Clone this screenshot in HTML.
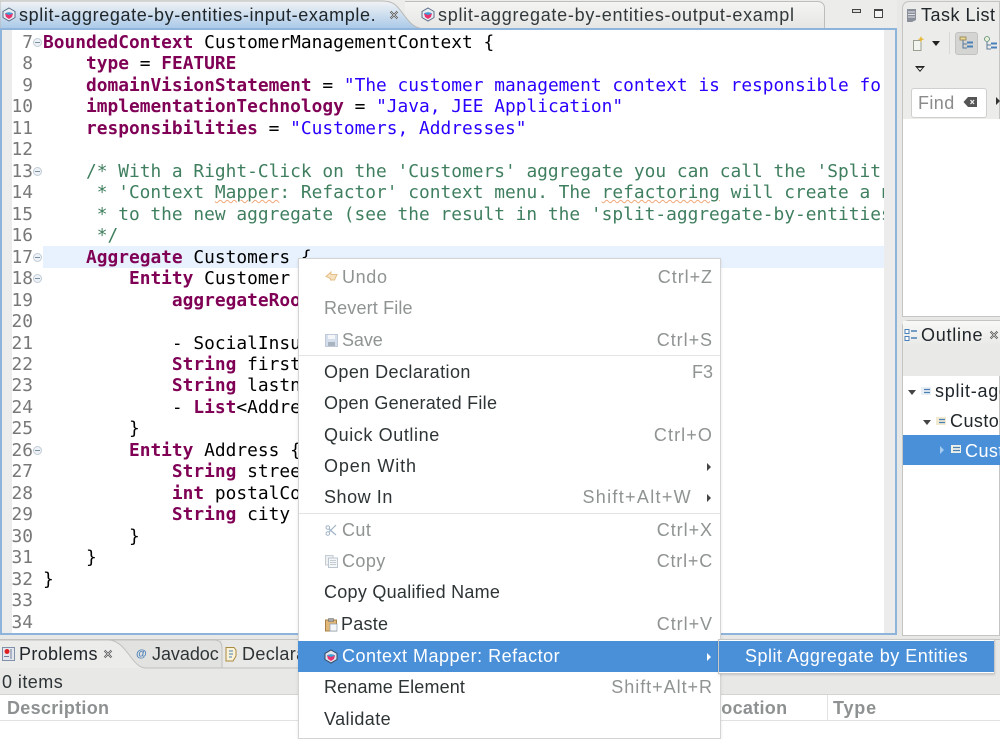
<!DOCTYPE html>
<html><head><meta charset="utf-8">
<style>
html,body{margin:0;padding:0;width:1000px;height:739px;overflow:hidden;background:#e8e8e7}
body{position:relative;font-family:"Liberation Sans",sans-serif;font-size:18px;color:#2e3436}
.a{position:absolute}
.t{position:absolute;white-space:pre;line-height:22px;letter-spacing:.45px}
#code{position:absolute;left:43px;top:31.95px;width:841px;height:601px;overflow:hidden;font-family:"DejaVu Sans Mono",monospace;font-size:17.85px;line-height:21.47px;color:#000;white-space:pre}
#nums{position:absolute;left:2px;top:31.95px;width:31px;text-align:right;font-family:"DejaVu Sans Mono",monospace;font-size:17.85px;line-height:21.47px;color:#787878;white-space:pre}
b{color:#7f0055;font-weight:bold}
.s{color:#2a00ff}.c{color:#3f7f5f}
.u{text-decoration:underline wavy #f0a878 1px}
.f{position:absolute;left:33px;width:7px;height:7px;border:1px solid #c0ccd6;border-radius:50%;background:#eef2f6}
.f:after{content:"";position:absolute;left:1px;top:3px;width:5px;height:1px;background:#7890a0}
.m{position:absolute;left:324px;white-space:pre;line-height:22px;letter-spacing:.42px;color:#2e3436}
.m.d{color:#8f9393}
.k{position:absolute;right:287px;white-space:pre;line-height:22px;letter-spacing:1px;color:#8f9393}
.sep{position:absolute;left:299px;width:421px;height:1px;background:#e4e4e4}
</style></head><body>

<!-- editor tab bar -->
<div class="a" style="left:0;top:0;width:897px;height:29px;background:#ececeb"></div>
<div class="a" style="left:405px;top:1px;width:420px;height:27px;background:linear-gradient(#f4f4f3,#e6e6e5);border-top:1px solid #bdbdbb;border-right:1px solid #bdbdbb;border-radius:0 7px 0 0;box-sizing:border-box"></div>
<svg class="a" style="left:0;top:0" width="430" height="30"><defs><linearGradient id="g" x1="0" y1="0" x2="0" y2="1"><stop offset="0" stop-color="#f1f3f5"/><stop offset="1" stop-color="#a9c9e8"/></linearGradient></defs><path d="M0 29V1H382C396 1 398 8 404 15C410 23 414 28 424 29Z" fill="url(#g)" stroke="#b8b8b6"/></svg>
<svg class="a" style="left:2px;top:7px" width="14" height="15" viewBox="0 0 14 15"><path d="M7 1L13 4.500V10.500L7 14L1 10.500V4.500Z" fill="#e9eef3" stroke="#5a6c85"/><path d="M3 6.500C5 5 9 5 11 6.500L10 10L7 12L4 10Z" fill="#e8336f"/><path d="M3 6.500C5 4.800 9 4.800 11 6.500L7 8Z" fill="#3aa0d8"/></svg>
<div class="t" style="left:19px;top:4px;color:#20262a;letter-spacing:.62px">split-aggregate-by-entities-input-example.</div>
<svg class="a" style="left:389px;top:10px" width="10" height="10" viewBox="0 0 10 10"><path d="M1.500 1.500L8.500 8.500M8.500 1.500L1.500 8.500" stroke="#444" stroke-width="2"/><path d="M1.500 1.500L8.500 8.500M8.500 1.500L1.500 8.500" stroke="#ddd" stroke-width=".8"/></svg>
<svg class="a" style="left:421px;top:7px" width="14" height="15" viewBox="0 0 14 15"><path d="M7 1L13 4.500V10.500L7 14L1 10.500V4.500Z" fill="#e9eef3" stroke="#5a6c85"/><path d="M3 6.500C5 5 9 5 11 6.500L10 10L7 12L4 10Z" fill="#e8336f"/><path d="M3 6.500C5 4.800 9 4.800 11 6.500L7 8Z" fill="#3aa0d8"/></svg>
<div class="t" style="left:438px;top:4px;letter-spacing:.72px;color:#33393b">split-aggregate-by-entities-output-exampl</div>
<div class="a" style="left:852px;top:9px;width:7px;height:2px;border:1px solid #444;background:#ddd;box-sizing:content-box"></div>
<div class="a" style="left:874px;top:9px;width:7px;height:6px;border:1px solid #444;border-top-width:2px;background:#f4f4f4"></div>
<div class="a" style="left:897px;top:0;width:5px;height:739px;background:#e8e8e7"></div>

<!-- editor -->
<div class="a" style="left:0;top:28px;width:897px;height:607px;background:#fff;border:2px solid #8fb4dc;box-sizing:border-box"></div>
<div class="a" style="left:2px;top:30px;width:10px;height:603px;background:#ececec"></div>
<div class="a" style="left:884px;top:30px;width:11px;height:603px;background:#ececec"></div>
<div class="a" style="left:43px;top:246px;width:841px;height:22px;background:#e8f2fe"></div>
<div id="nums">7
8
9
10
11
12
13
14
15
16
17
18
19
20
21
22
23
24
25
26
27
28
29
30
31
32
33
34</div>
<div class="f" style="top:38px"></div>
<div class="f" style="top:167px"></div>
<div class="f" style="top:253px"></div>
<div class="f" style="top:274px"></div>
<div class="f" style="top:446px"></div>
<div id="code"><b>BoundedContext</b> CustomerManagementContext {
    <b>type</b> = <b>FEATURE</b>
    <b>domainVisionStatement</b> = <span class="s">"The customer management context is responsible for managing</span>
    <b>implementationTechnology</b> = <span class="s">"Java, JEE Application"</span>
    <b>responsibilities</b> = <span class="s">"Customers, Addresses"</span>

    <span class="c">/* With a Right-Click on the 'Customers' aggregate you can call the 'Split Aggregate</span>
<span class="c">     * 'Context <span class="u">Mapper</span>: Refactor' context menu. The <span class="u">refactoring</span> will create a new aggregate</span>
<span class="c">     * to the new aggregate (see the result in the 'split-aggregate-by-entities-output</span>
<span class="c">     */</span>
    <b>Aggregate</b> Customers {
        <b>Entity</b> Customer {
            <b>aggregateRoot</b>

            - SocialInsuranceNumber
            <b>String</b> firstname
            <b>String</b> lastname
            - <b>List</b>&lt;Address&gt;
        }
        <b>Entity</b> Address {
            <b>String</b> street
            <b>int</b> postalCode
            <b>String</b> city
        }
    }
}</div>

<!-- task list panel -->
<div class="a" style="left:902px;top:1px;width:98px;height:316px;background:#ececeb;border:1px solid #c4c4c2;border-radius:7px 0 0 0;box-sizing:border-box"></div>
<div class="a" style="left:903px;top:119px;width:97px;height:197px;background:#fff"></div>
<svg class="a" style="left:906px;top:8px" width="12" height="15" viewBox="0 0 12 15"><path d="M1 1H10V12L6 14H1Z" fill="#8a8f9a"/><path d="M2 4H9M2 6.500H9M2 9H9" stroke="#e0e2e6"/></svg>
<div class="t" style="left:921px;top:4px;color:#20262a;letter-spacing:.5px">Task List</div>
<svg class="a" style="left:912px;top:35px" width="24" height="17" viewBox="0 0 24 17"><path d="M1.500 5.500H9V15.500H1.500Z" fill="#f2f4f0" stroke="#9a9f90"/><path d="M9 1L10 3.500L12.500 4L10 5L9 7.500L8 5L5.500 4L8 3.500Z" fill="#e8b830"/></svg>
<div class="a" style="left:932px;top:41px;border-left:4px solid transparent;border-right:4px solid transparent;border-top:5px solid #222"></div>
<div class="a" style="left:949px;top:32px;width:1px;height:22px;background:#d8d8d6"></div>
<div class="a" style="left:955px;top:32px;width:21px;height:21px;background:#d4d4d2;border:1px solid #c2c2c0;border-radius:3px"></div>
<svg class="a" style="left:959px;top:36px" width="16" height="16" viewBox="0 0 16 16"><path d="M1 1H7V4H1Z" fill="#e8d898" stroke="#8a7a40" stroke-width=".7"/><path d="M4 4V12H8M4 8H8" stroke="#5a7a9a" fill="none"/><path d="M8 6.500H14M8 10.500H14" stroke="#4a80b8" stroke-width="2"/></svg>
<svg class="a" style="left:983px;top:36px" width="17" height="16" viewBox="0 0 17 16"><circle cx="4" cy="3" r="2.500" fill="#e8f0d8" stroke="#5a8a7a" stroke-width=".8"/><path d="M4 6V13H8M4 9H8" stroke="#5a7a9a" fill="none"/><path d="M8 7.500H14M8 11.500H14" stroke="#4a80b8" stroke-width="2"/></svg>
<svg class="a" style="left:915px;top:66px" width="10" height="7" viewBox="0 0 10 7"><path d="M0 0H10L5 6Z" fill="#222"/><path d="M2.500 1.800H7.500L5 4.400Z" fill="#f4f4f4"/></svg>
<div class="a" style="left:911px;top:88px;width:74px;height:28px;background:#fff;border:1px solid #cfcfcd;border-radius:3px"></div>
<div class="t" style="left:918px;top:92px;color:#8a8c8c;letter-spacing:.4px">Find</div>
<svg class="a" style="left:963px;top:96px" width="15" height="12" viewBox="0 0 15 12"><path d="M5 1H14V11H5L0.500 6Z" fill="#555"/><path d="M7.500 4L11 8M11 4L7.500 8" stroke="#eee" stroke-width="1.300"/></svg>
<div class="a" style="left:996px;top:97px;border-top:4px solid transparent;border-bottom:4px solid transparent;border-left:4px solid #333"></div>

<!-- outline panel -->
<div class="a" style="left:902px;top:320px;width:98px;height:316px;background:#fff;border:1px solid #c4c4c2;border-radius:7px 0 0 0;box-sizing:border-box"></div>
<div class="a" style="left:903px;top:321px;width:97px;height:55px;background:linear-gradient(#f8f8f7,#e9e9e8 45%,#e9e9e8)"></div>
<svg class="a" style="left:904px;top:328px" width="14" height="14" viewBox="0 0 14 14"><path d="M1 1.500H5V5.500H1ZM1 8.500H5V12.500H1Z" fill="#fff" stroke="#4a80b8"/><path d="M7 3H13M7 10H13" stroke="#4a80b8" stroke-width="1.500"/></svg>
<div class="t" style="left:921px;top:324px;color:#20262a;letter-spacing:.75px">Outline</div>
<svg class="a" style="left:989px;top:330px" width="10" height="10" viewBox="0 0 10 10"><path d="M1.500 1.500L8.500 8.500M8.500 1.500L1.500 8.500" stroke="#444" stroke-width="2"/><path d="M1.500 1.500L8.500 8.500M8.500 1.500L1.500 8.500" stroke="#ddd" stroke-width=".8"/></svg>
<div class="a" style="left:908px;top:390px;border-left:4px solid transparent;border-right:4px solid transparent;border-top:5px solid #444"></div>
<svg class="a" style="left:920px;top:386px" width="12" height="10" viewBox="0 0 12 10"><path d="M1 1H11V9H1Z" fill="#e8eef4"/><path d="M4 3.500H10M4 6.500H10" stroke="#4a80b8" stroke-width="1.300"/></svg>
<div class="t" style="left:935px;top:380px;width:65px;overflow:hidden;color:#20262a;letter-spacing:.75px">split-aggregate</div>
<div class="a" style="left:923px;top:420px;border-left:4px solid transparent;border-right:4px solid transparent;border-top:5px solid #444"></div>
<svg class="a" style="left:935px;top:416px" width="12" height="10" viewBox="0 0 12 10"><path d="M1 1H11V9H1Z" fill="#f2ead0"/><path d="M4 3.500H10M4 6.500H10" stroke="#4a80b8" stroke-width="1.300"/></svg>
<div class="t" style="left:950px;top:410px;width:50px;overflow:hidden;color:#20262a">CustomerManagement</div>
<div class="a" style="left:903px;top:435px;width:97px;height:30px;background:#4a90d9;overflow:hidden">
<div class="a" style="left:37px;top:11px;border-top:4px solid transparent;border-bottom:4px solid transparent;border-left:4px solid #a8ccf0"></div>
<svg class="a" style="left:47px;top:9px" width="12" height="10" viewBox="0 0 12 10"><path d="M1 1H11V9H1Z" fill="#eef0e8"/><path d="M3 3.500H10M3 6.500H10" stroke="#4a80b8" stroke-width="1.300"/></svg>
<div class="t" style="left:62px;top:5px;width:35px;overflow:hidden;color:#fff">Customers</div>
</div>

<!-- bottom panel -->
<div class="a" style="left:0;top:639px;width:1000px;height:1px;background:#c4c4c2"></div>
<div class="a" style="left:0;top:640px;width:1000px;height:29px;background:#e8e8e7"></div>
<svg class="a" style="left:0;top:638px" width="300" height="32"><path d="M146 30H222V2H108C118 2 124 10 130 18C136 26 140 30 146 30Z" fill="#e2e2e1"/><path d="M0 30V2H108C118 2 124 10 130 18C136 26 140 30 146 30Z" fill="#ececeb"/><path d="M0 2H108C118 2 124 10 130 18C136 26 140 30 146 30H300" fill="none" stroke="#c0c0be"/><path d="M108 2H214Q222 2 222 10V30" fill="none" stroke="#c0c0be"/></svg>
<svg class="a" style="left:2px;top:647px" width="13" height="14" viewBox="0 0 13 14"><path d="M.5 .5H12.500V13.500H.5Z" fill="#e4e8ee" stroke="#8090a8"/><circle cx="5" cy="4.500" r="2.500" fill="#e02020"/><path d="M9 2V12M2 9.500H7" stroke="#70809a"/></svg>
<div class="t" style="left:19px;top:643px;color:#20262a;letter-spacing:.35px">Problems</div>
<svg class="a" style="left:103px;top:649px" width="10" height="10" viewBox="0 0 10 10"><path d="M1.500 1.500L8.500 8.500M8.500 1.500L1.500 8.500" stroke="#444" stroke-width="2"/><path d="M1.500 1.500L8.500 8.500M8.500 1.500L1.500 8.500" stroke="#ddd" stroke-width=".8"/></svg>
<div class="a" style="left:136px;top:647px;font-size:11px;font-weight:bold;color:#4a80b8;line-height:14px">@</div>
<div class="t" style="left:152px;top:643px;letter-spacing:-.05px">Javadoc</div>
<svg class="a" style="left:225px;top:647px" width="13" height="15" viewBox="0 0 13 15"><path d="M1 .5H9L11 3V9L8 14H1Z" fill="#fbf2d8" stroke="#a88a40"/><path d="M4 4H8M4 7H8M4 10H7" stroke="#4a80b8"/></svg>
<div class="t" style="left:242px;top:643px;letter-spacing:.35px">Declaration</div>
<div class="t" style="left:2px;top:671px">0 items</div>
<div class="a" style="left:0;top:694px;width:1000px;height:45px;background:#fff;border-top:1px solid #d4d4d2;box-sizing:border-box"></div>
<div class="a" style="left:0;top:720px;width:1000px;height:1px;background:#e2e2e0"></div>
<div class="t" style="left:7px;top:697px;color:#8e9192;font-weight:bold;letter-spacing:.3px">Description</div>
<div class="t" style="left:710px;top:697px;color:#8e9192;font-weight:bold;letter-spacing:.3px">Location</div>
<div class="a" style="left:827px;top:695px;width:1px;height:25px;background:#e2e2e0"></div>
<div class="t" style="left:833px;top:697px;color:#8e9192;font-weight:bold;letter-spacing:.8px">Type</div>

<!-- context menu -->
<div class="a" style="left:298px;top:258px;width:423px;height:481px;background:#fff;border:1px solid #d4d4d4;box-sizing:border-box;box-shadow:0 1px 3px rgba(0,0,0,.1)"></div>
<div class="sep" style="top:355px"></div>
<div class="sep" style="top:513px"></div>
<svg class="a" style="left:325px;top:270px" width="13" height="13" viewBox="0 0 13 13"><path d="M1 6.500L6 2V4.500H12L9.500 10H5.500V8.500L1 6.500Z" fill="#f6e2c0" stroke="#e4bf88"/></svg>
<div class="m d" style="left:342px;top:266px;letter-spacing:.65px">Undo</div><div class="k" style="top:266px;letter-spacing:.95px">Ctrl+Z</div>
<div class="m d" style="top:297px;letter-spacing:.15px">Revert File</div>
<svg class="a" style="left:325px;top:334px" width="13" height="13" viewBox="0 0 13 13"><path d="M.5 .5H12.500V12.500H.5Z" fill="#d4deec" stroke="#c0cad8"/><path d="M3 1H10V5H3Z" fill="#f4f6f8"/><path d="M3 8H10V12H3Z" fill="#aab4c0"/></svg>
<div class="m d" style="left:342px;top:329px;letter-spacing:-.1px">Save</div><div class="k" style="top:329px;letter-spacing:.95px">Ctrl+S</div>
<div class="m" style="top:361px">Open Declaration</div><div class="k" style="top:361px;letter-spacing:0">F3</div>
<div class="m" style="top:392px;letter-spacing:.27px">Open Generated File</div>
<div class="m" style="top:424px;letter-spacing:.6px">Quick Outline</div><div class="k" style="top:424px;letter-spacing:1.1px">Ctrl+O</div>
<div class="m" style="top:455px;letter-spacing:.87px">Open With</div>
<div class="a" style="left:707px;top:463px;border-top:4px solid transparent;border-bottom:4px solid transparent;border-left:4px solid #444"></div>
<div class="m" style="top:486px;letter-spacing:.55px">Show In</div><div class="k" style="right:308px;top:486px;letter-spacing:1.32px">Shift+Alt+W</div>
<div class="a" style="left:707px;top:494px;border-top:4px solid transparent;border-bottom:4px solid transparent;border-left:4px solid #444"></div>
<svg class="a" style="left:325px;top:524px" width="13" height="13" viewBox="0 0 13 13"><path d="M11 1L4 8M11 11L4 5" stroke="#9fb3c6" fill="none" stroke-width="1.200"/><circle cx="2.800" cy="3.500" r="1.800" fill="none" stroke="#9fb3c6"/><circle cx="2.800" cy="9.500" r="1.800" fill="none" stroke="#9fb3c6"/></svg>
<div class="m d" style="left:342px;top:519px">Cut</div><div class="k" style="top:519px;letter-spacing:.95px">Ctrl+X</div>
<svg class="a" style="left:325px;top:555px" width="13" height="13" viewBox="0 0 13 13"><path d="M.5 .5H8V10H.5Z" fill="#eef0f2" stroke="#c4ccd4"/><path d="M3.500 3H12.500V12.500H3.500Z" fill="#f4f6f8" stroke="#bcc6d0"/><path d="M5 5.500H11M5 7.500H11M5 9.500H11" stroke="#c4ccd4"/></svg>
<div class="m d" style="left:342px;top:550px">Copy</div><div class="k" style="top:550px;letter-spacing:.8px">Ctrl+C</div>
<div class="m" style="top:581px;letter-spacing:.27px">Copy Qualified Name</div>
<svg class="a" style="left:325px;top:618px" width="13" height="14" viewBox="0 0 13 14"><path d="M.5 2H11.500V13H.5Z" fill="#e2b878" stroke="#a88048"/><path d="M3.500 .5H8.500V3.500H3.500Z" fill="#a8a8a8" stroke="#707070" stroke-width=".6"/><path d="M5 6H12V13H5Z" fill="#f4f6fa" stroke="#90a0b4" stroke-width=".7"/></svg>
<div class="m" style="left:341px;top:613px;letter-spacing:.25px">Paste</div><div class="k" style="top:613px;letter-spacing:.95px">Ctrl+V</div>
<div class="a" style="left:298px;top:641px;width:423px;height:31px;background:#4a90d9"></div>
<svg class="a" style="left:324px;top:649px" width="14" height="15" viewBox="0 0 14 15"><path d="M7 1L13 4.500V10.500L7 14L1 10.500V4.500Z" fill="#dfe6ee" stroke="#34455f"/><path d="M3 6.500C5 5 9 5 11 6.500L10 10L7 12L4 10Z" fill="#e8336f"/><path d="M3 6.500C5 4.800 9 4.800 11 6.500L7 8Z" fill="#3aa0d8"/></svg>
<div class="m" style="left:342px;top:645px;color:#fff;letter-spacing:.5px">Context Mapper: Refactor</div>
<div class="a" style="left:707px;top:653px;border-top:4px solid transparent;border-bottom:4px solid transparent;border-left:4px solid #fff"></div>
<div class="m" style="top:676px;letter-spacing:.14px">Rename Element</div><div class="k" style="top:676px;letter-spacing:.97px">Shift+Alt+R</div>
<div class="m" style="top:708px">Validate</div>

<!-- submenu -->
<div class="a" style="left:718px;top:639px;width:277px;height:35px;background:#fff;border:1px solid #c8c8c8;box-sizing:border-box;box-shadow:0 1px 2px rgba(0,0,0,.15)"></div>
<div class="a" style="left:719px;top:641px;width:275px;height:31px;background:#4a90d9"></div>
<div class="m" style="left:745px;top:645px;color:#fff;letter-spacing:.48px">Split Aggregate by Entities</div>
</body></html>
